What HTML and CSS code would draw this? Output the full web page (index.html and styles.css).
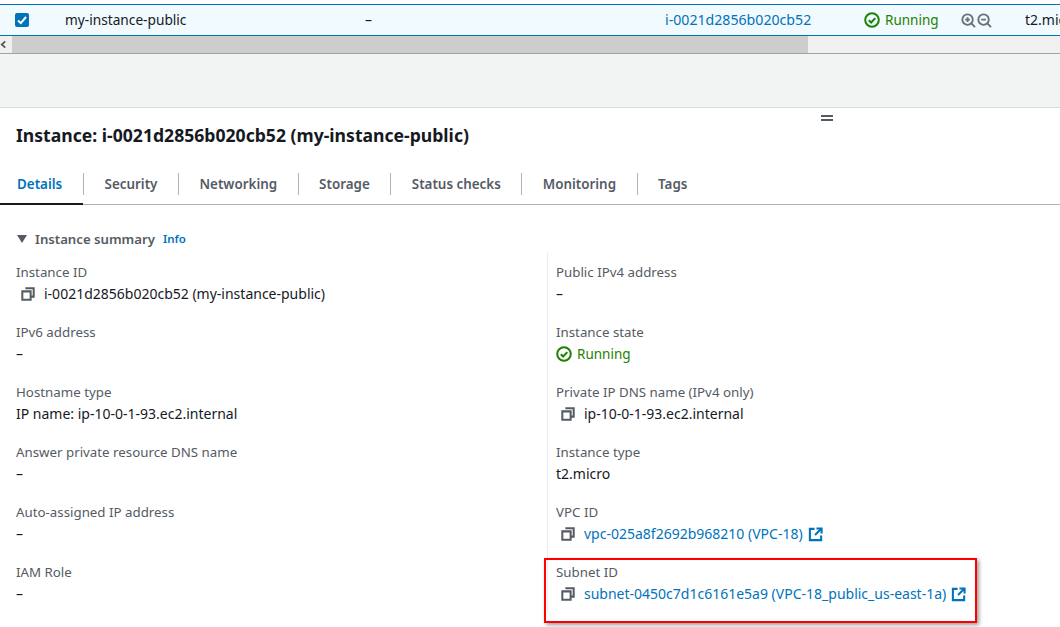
FILE: index.html
```html
<!DOCTYPE html>
<html lang="en">
<head>
  <meta charset="UTF-8">
  <meta name="viewport" content="width=device-width, initial-scale=1.0">
  <title>Instance details</title>
  <link rel="stylesheet" href="styles.css">
</head>
<body>
  <svg width="0" height="0" class="sprites">
    <symbol id="copy" viewBox="0 0 16 16">
      <path d="M5 1.5h9.5V11H11M1.5 5H11v9.5H1.5z" fill="none" stroke="currentColor" stroke-width="2.3"/>
    </symbol>
    <symbol id="external" viewBox="0 0 16 16">
      <path d="M7 2H2v12h12V9M9 1.5h5.5V7M14 2L7.5 8.5" fill="none" stroke="currentColor" stroke-width="2.2"/>
    </symbol>
    <symbol id="ok" viewBox="0 0 16 16">
      <circle cx="8" cy="8" r="6.8" fill="none" stroke="currentColor" stroke-width="2"/>
      <path d="M4.8 8.2l2.3 2.3 4.2-4.4" fill="none" stroke="currentColor" stroke-width="2"/>
    </symbol>
  </svg>

  <div class="table-row">
    <div class="cell cell-check">
      <span class="checkbox">
        <svg viewBox="0 0 14 14" width="14" height="14"><path d="M3 7.5l2.8 2.6L11 4" fill="none" stroke="#fff" stroke-width="2"/></svg>
      </span>
    </div>
    <div class="cell cell-name">my-instance-public</div>
    <div class="cell cell-dash">–</div>
    <div class="cell cell-id"><a href="#">i-0021d2856b020cb52</a></div>
    <div class="cell cell-state">
      <span class="status"><svg class="icon"><use href="#ok"/></svg>Running</span>
    </div>
    <div class="cell cell-zoom">
      <svg viewBox="0 0 16 16" width="15" height="15"><circle cx="7" cy="7" r="5.6" fill="none" stroke="#687078" stroke-width="2"/><path d="M11 11l4 4M4.5 7h5M7 4.5v5" fill="none" stroke="#687078" stroke-width="2"/></svg>
      <svg viewBox="0 0 16 16" width="15" height="15"><circle cx="7" cy="7" r="5.6" fill="none" stroke="#687078" stroke-width="2"/><path d="M11 11l4 4M4.5 7h5" fill="none" stroke="#687078" stroke-width="2"/></svg>
    </div>
    <div class="cell cell-type">t2.micro</div>
  </div>

  <div class="scrollbar">
    <div class="scroll-arrow">
      <svg viewBox="0 0 8 10" width="7" height="9"><path d="M6 1.5L2 5l4 3.5" fill="none" stroke="#555" stroke-width="2"/></svg>
    </div>
    <div class="scroll-thumb"></div>
  </div>

  <div class="band"></div>

  <section class="panel">
    <div class="handle"></div>
    <h2 class="panel-title">Instance: i-0021d2856b020cb52 (my-instance-public)</h2>

    <nav class="tabs">
      <a class="tab tab-active" href="#">Details</a>
      <a class="tab" href="#">Security</a>
      <a class="tab" href="#">Networking</a>
      <a class="tab" href="#">Storage</a>
      <a class="tab" href="#">Status checks</a>
      <a class="tab" href="#">Monitoring</a>
      <a class="tab" href="#">Tags</a>
    </nav>

    <div class="summary-head">
      <span class="caret"></span>
      <span class="summary-title">Instance summary</span>
      <a class="info" href="#">Info</a>
    </div>

    <div class="summary">
      <div class="col col-left">
        <div class="field">
          <div class="label">Instance ID</div>
          <div class="value value-copy"><svg class="icon copy"><use href="#copy"/></svg>i-0021d2856b020cb52 (my-instance-public)</div>
        </div>
        <div class="field">
          <div class="label">IPv6 address</div>
          <div class="value">–</div>
        </div>
        <div class="field">
          <div class="label">Hostname type</div>
          <div class="value">IP name: ip-10-0-1-93.ec2.internal</div>
        </div>
        <div class="field">
          <div class="label">Answer private resource DNS name</div>
          <div class="value">–</div>
        </div>
        <div class="field">
          <div class="label">Auto-assigned IP address</div>
          <div class="value">–</div>
        </div>
        <div class="field">
          <div class="label">IAM Role</div>
          <div class="value">–</div>
        </div>
      </div>

      <div class="col col-right">
        <div class="field">
          <div class="label">Public IPv4 address</div>
          <div class="value">–</div>
        </div>
        <div class="field">
          <div class="label">Instance state</div>
          <div class="value"><span class="status"><svg class="icon"><use href="#ok"/></svg>Running</span></div>
        </div>
        <div class="field">
          <div class="label">Private IP DNS name (IPv4 only)</div>
          <div class="value value-copy"><svg class="icon copy"><use href="#copy"/></svg>ip-10-0-1-93.ec2.internal</div>
        </div>
        <div class="field">
          <div class="label">Instance type</div>
          <div class="value">t2.micro</div>
        </div>
        <div class="field">
          <div class="label">VPC ID</div>
          <div class="value value-copy"><svg class="icon copy"><use href="#copy"/></svg><a href="#">vpc-025a8f2692b968210 (VPC-18)</a><svg class="icon external"><use href="#external"/></svg></div>
        </div>
        <div class="field">
          <div class="label">Subnet ID</div>
          <div class="value value-copy"><svg class="icon copy"><use href="#copy"/></svg><a href="#">subnet-0450c7d1c6161e5a9 (VPC-18_public_us-east-1a)</a><svg class="icon external"><use href="#external"/></svg></div>
        </div>
      </div>
    </div>
  </section>

  <div class="highlight"></div>
</body>
</html>
```

FILE: styles.css
```css
* {
  box-sizing: border-box;
}

html, body {
  margin: 0;
  height: 627px;
  overflow: hidden;
}

body {
  padding-top: 4px;
  background: #fff;
  color: #16191f;
  font-family: "Noto Sans", Arial, sans-serif;
  font-size: 14px;
  line-height: 20px;
  position: relative;
}

a {
  color: #0073bb;
  text-decoration: none;
}

.sprites {
  position: absolute;
}

.icon {
  width: 16px;
  height: 16px;
  flex: none;
}

/* selected table row */
.table-row {
  display: flex;
  align-items: center;
  height: 32px;
  background: #f1faff;
  border-top: 1px solid #0073bb;
  border-bottom: 1px solid #0073bb;
  white-space: nowrap;
  overflow: hidden;
}

.cell {
  flex: none;
  display: flex;
  align-items: center;
}

.cell-check { width: 65px; padding-left: 15px; }
.cell-name { width: 300px; font-size: 13.7px; }
.cell-dash { width: 300px; }
.cell-id { width: 199px; font-size: 14.15px; }
.cell-state { width: 97px; }
.cell-zoom { width: 64px; gap: 1px; }

.checkbox {
  width: 14px;
  height: 14px;
  border-radius: 2px;
  background: #0073bb;
  display: block;
}

.checkbox svg {
  display: block;
}

.status {
  display: inline-flex;
  align-items: center;
  gap: 5px;
  font-size: 13.5px;
  color: #1d8102;
}

.scrollbar {
  display: flex;
  height: 18px;
  background: #f0f0f0;
  border-bottom: 1px solid #a3a3a3;
}

.scroll-arrow {
  width: 12px;
  display: flex;
  align-items: center;
}

.scroll-thumb {
  width: 796px;
  background: #cdcdcd;
}

.band {
  height: 54px;
  background: #f2f3f3;
  border-bottom: 1px solid #d5dbdb;
}

.panel {
  position: relative;
}

.handle {
  position: absolute;
  left: 821px;
  top: 7px;
  width: 12px;
  height: 6px;
  border-top: 2px solid #545b64;
  border-bottom: 2px solid #545b64;
}

.panel-title {
  margin: 0;
  padding: 16px 16px 0;
  font-size: 17.6px;
  line-height: 22px;
  font-weight: 700;
}

.tabs {
  display: flex;
  margin-top: 17px;
  height: 42px;
  border-bottom: 1px solid #aab7b8;
  padding-top: 10px;
}

.tab {
  position: relative;
  height: 22px;
  line-height: 22px;
  padding: 0 20.5px;
  font-size: 13.4px;
  font-weight: 600;
  color: #545b64;
  border-right: 1px solid #aab7b8;
  white-space: nowrap;
}

.tab:last-child {
  border-right: none;
}

.tab-active {
  color: #0073bb;
  padding: 0 21px 0 17px;
}

.tab-active::after {
  content: "";
  position: absolute;
  left: 0;
  right: 0;
  top: 30px;
  height: 2px;
  background: #16191f;
}

.summary-head {
  display: flex;
  align-items: center;
  padding: 24px 16px 0;
  height: 44px;
}

.caret {
  width: 0;
  height: 0;
  border-left: 5px solid transparent;
  border-right: 5px solid transparent;
  border-top: 8px solid #545b64;
  margin: 0 8px 0 1px;
}

.summary-title {
  font-size: 13.2px;
  font-weight: 600;
  color: #545b64;
}

.info {
  margin-left: 8px;
  font-size: 11.5px;
  font-weight: 600;
}

.summary {
  display: flex;
  margin-top: 4px;
}

.col {
  flex: none;
}

.col-left {
  width: 547px;
  padding-left: 16px;
}

.col-right {
  flex: 1;
  border-left: 1px solid #eaeded;
  padding-left: 8px;
}

.field {
  height: 60px;
  padding-top: 9px;
}

.label {
  color: #545b64;
  font-size: 13.3px;
  height: 22px;
}

.value {
  height: 20px;
  display: flex;
  align-items: center;
  white-space: nowrap;
}

.value-copy {
  padding-left: 5px;
}

.copy {
  width: 14px;
  height: 14px;
  margin-right: 9px;
  color: #545b64;
}

.external {
  width: 15px;
  height: 15px;
  margin-left: 5px;
  color: #0073bb;
}

/* red annotation around the subnet field */
.highlight {
  position: absolute;
  left: 544px;
  top: 558px;
  width: 433px;
  height: 65px;
  border: 2px solid #f00;
  box-shadow: 2px 2px 4px rgba(0, 0, 0, 0.4);
}
```
